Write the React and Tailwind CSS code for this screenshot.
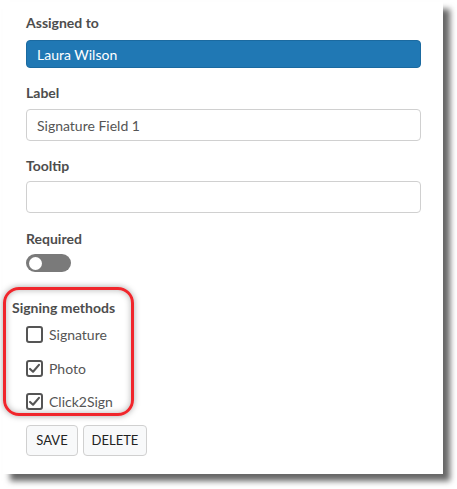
import React from "react";

function Check({ checked }) {
  return (
    <span className="w-[17px] h-[17px] rounded-[3px] border-2 border-[#555] bg-white flex items-center justify-center shrink-0">
      {checked && (
        <svg width="13" height="13" viewBox="0 0 16 16">
          <path d="M2.5 8.5 L6.2 12 L13.5 3.5" fill="none" stroke="#555" strokeWidth="2.6" strokeLinecap="round" strokeLinejoin="round" />
        </svg>
      )}
    </span>
  );
}

function Label({ children, className = "" }) {
  return (
    <div className={"h-[20px] leading-[20px] text-[14px] font-bold text-[#4d4d4d] " + className}>{children}</div>
  );
}

export default function App() {
  return (
    <div className="w-[457px] h-[489px] bg-white overflow-hidden" style={{ fontFamily: "Lato, 'Open Sans', sans-serif" }}>
      <div className="relative ml-[3px] mt-[2px] w-[440px] h-[472px] bg-white shadow-[7px_7px_6px_rgba(0,0,0,0.6)] pt-[11px] pl-[23px] pr-[22px]">
        <Label>Assigned to</Label>
        <div className="mt-[7px] h-[28px] rounded-[4px] bg-[#2078b4] border border-[#1b6aa0] flex items-center pl-[10px] text-[14px] text-white">
          Laura Wilson
        </div>

        <Label className="mt-[15px]">Label</Label>
        <div className="mt-[6px] h-[32px] rounded-[4px] border border-[#d0d0d0] flex items-center pl-[10px] text-[14px] text-[#555]">
          Signature Field 1
        </div>

        <Label className="mt-[15px]">Tooltip</Label>
        <div className="mt-[5px] h-[32px] rounded-[4px] border border-[#d0d0d0]"></div>

        <Label className="mt-[16px]">Required</Label>
        <div className="mt-[5px] w-[45px] h-[18px] rounded-full bg-[#7a7a7a] flex items-center pl-[3px]">
          <span className="w-[13px] h-[13px] rounded-full bg-white"></span>
        </div>

        <Label className="mt-[26px] -ml-[14px]">Signing methods</Label>
        <div className="mt-[8px] flex items-center gap-[6px] h-[17px] text-[14px] text-[#555]">
          <Check checked={false} />
          <span>Signature</span>
        </div>
        <div className="mt-[17px] flex items-center gap-[6px] h-[17px] text-[14px] text-[#555]">
          <Check checked={true} />
          <span>Photo</span>
        </div>
        <div className="mt-[16px] flex items-center gap-[6px] h-[17px] text-[14px] text-[#555]">
          <Check checked={true} />
          <span>Click2Sign</span>
        </div>

        <div className="mt-[15px] flex gap-[5px]">
          <button className="w-[52px] h-[31px] rounded-[4px] border border-[#d0d0d0] bg-[#f8f9fa] text-[13px] font-normal text-[#222]">SAVE</button>
          <button className="w-[64px] h-[31px] rounded-[4px] border border-[#d0d0d0] bg-[#f8f9fa] text-[13px] font-normal text-[#222]">DELETE</button>
        </div>

        <div className="absolute left-[0px] top-[285px] w-[131px] h-[129px] rounded-[16px] border-[3px] border-[#f0262c] shadow-[0_0_6px_rgba(0,0,0,0.35),inset_0_0_6px_rgba(0,0,0,0.3)] pointer-events-none"></div>
      </div>
    </div>
  );
}
